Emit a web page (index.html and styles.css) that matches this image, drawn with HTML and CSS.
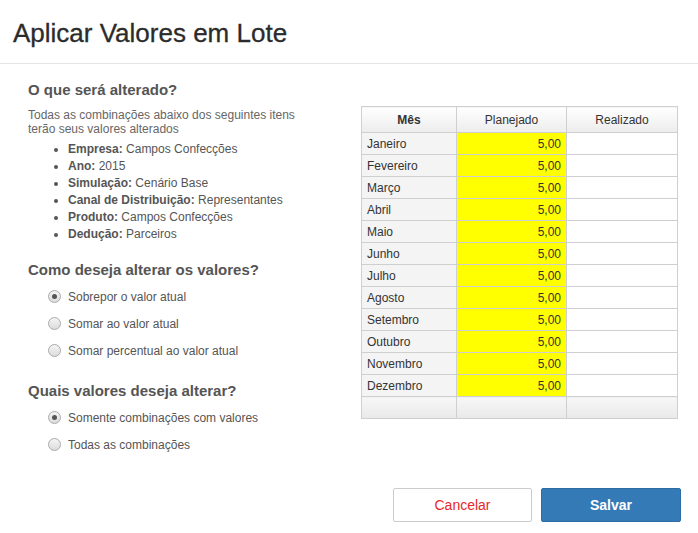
FILE: index.html
```html
<!DOCTYPE html>
<html lang="pt-BR">
<head>
<meta charset="utf-8">
<title>Aplicar Valores em Lote</title>
<link rel="stylesheet" href="styles.css">
</head>
<body>
<div class="modal">
  <header class="modal-header">
    <h1 class="modal-title">Aplicar Valores em Lote</h1>
  </header>
  <div class="modal-body">
    <section class="options">
      <h2 class="section-title first">O que será alterado?</h2>
      <p class="desc">Todas as combinações abaixo dos seguintes itens<br>terão seus valores alterados</p>
      <ul class="filters">
        <li><b>Empresa:</b> Campos Confecções</li>
        <li><b>Ano:</b> 2015</li>
        <li><b>Simulação:</b> Cenário Base</li>
        <li><b>Canal de Distribuição:</b> Representantes</li>
        <li><b>Produto:</b> Campos Confecções</li>
        <li><b>Dedução:</b> Parceiros</li>
      </ul>
      <h2 class="section-title">Como deseja alterar os valores?</h2>
      <div class="radios">
        <label class="radio"><span class="dot checked"></span>Sobrepor o valor atual</label>
        <label class="radio"><span class="dot"></span>Somar ao valor atual</label>
        <label class="radio"><span class="dot"></span>Somar percentual ao valor atual</label>
      </div>
      <h2 class="section-title">Quais valores deseja alterar?</h2>
      <div class="radios">
        <label class="radio"><span class="dot checked"></span>Somente combinações com valores</label>
        <label class="radio"><span class="dot"></span>Todas as combinações</label>
      </div>
    </section>
    <section class="grid-wrap">
      <table class="grid">
        <thead>
          <tr><th class="c-mes">Mês</th><th class="c-plan">Planejado</th><th class="c-real">Realizado</th></tr>
        </thead>
        <tbody>
          <tr><td class="mes">Janeiro</td><td class="plan">5,00</td><td></td></tr>
          <tr><td class="mes">Fevereiro</td><td class="plan">5,00</td><td></td></tr>
          <tr><td class="mes">Março</td><td class="plan">5,00</td><td></td></tr>
          <tr><td class="mes">Abril</td><td class="plan">5,00</td><td></td></tr>
          <tr><td class="mes">Maio</td><td class="plan">5,00</td><td></td></tr>
          <tr><td class="mes">Junho</td><td class="plan">5,00</td><td></td></tr>
          <tr><td class="mes">Julho</td><td class="plan">5,00</td><td></td></tr>
          <tr><td class="mes">Agosto</td><td class="plan">5,00</td><td></td></tr>
          <tr><td class="mes">Setembro</td><td class="plan">5,00</td><td></td></tr>
          <tr><td class="mes">Outubro</td><td class="plan">5,00</td><td></td></tr>
          <tr><td class="mes">Novembro</td><td class="plan">5,00</td><td></td></tr>
          <tr><td class="mes">Dezembro</td><td class="plan">5,00</td><td></td></tr>
        </tbody>
        <tfoot>
          <tr><td></td><td></td><td></td></tr>
        </tfoot>
      </table>
    </section>
  </div>
  <footer class="modal-footer">
    <button class="btn btn-cancel">Cancelar</button>
    <button class="btn btn-save">Salvar</button>
  </footer>
</div>
</body>
</html>
```
FILE: styles.css
```css
* { box-sizing: border-box; }
html, body { margin: 0; padding: 0; background: #fff; }
body {
  font-family: "Liberation Sans", Arial, sans-serif;
  color: #555;
  width: 698px;
  height: 533px;
  overflow: hidden;
}
.modal-header {
  height: 64px;
  padding: 18px 13px 0;
  border-bottom: 1px solid #e5e5e5;
}
.modal-title {
  margin: 0;
  font-size: 26px;
  line-height: 30px;
  font-weight: normal;
  color: #2b2b2b;
  -webkit-text-stroke: 0.3px #2b2b2b;
}
.modal-body {
  display: flex;
  padding: 0 20px 0 28px;
}
.options { width: 334px; }
.section-title {
  margin: 18px 0 0;
  font-size: 15px;
  line-height: 18px;
  font-weight: bold;
  color: #555;
}
.section-title.first { margin-top: 17px; }
.desc {
  margin: 9px 0 0;
  font-size: 12px;
  line-height: 14px;
  color: #666;
}
.filters {
  margin: 5px 0 0;
  padding-left: 40px;
  font-size: 12px;
  line-height: 17px;
  color: #555;
}
.filters b { color: #555; }
.radios {
  margin-top: 4px;
  padding-left: 20px;
  display: flex;
  flex-direction: column;
}
.radio {
  display: flex;
  align-items: center;
  height: 27px;
  font-size: 12px;
  color: #555;
}
.dot {
  width: 13px;
  height: 13px;
  border-radius: 50%;
  border: 1px solid #aaa;
  background: linear-gradient(#f4f4f4, #dcdcdc);
  margin-right: 7px;
  display: inline-flex;
  align-items: center;
  justify-content: center;
}
.dot.checked::after {
  content: "";
  width: 5px;
  height: 5px;
  border-radius: 50%;
  background: #555;
}
.grid-wrap { padding-top: 42px; }
.grid {
  border-collapse: collapse;
  font-size: 12px;
  color: #333;
  table-layout: fixed;
  width: 317px;
}
.grid th, .grid td {
  border: 1px solid #cfcfcf;
  padding: 0 5px;
}
.grid th {
  height: 26px;
  font-weight: bold;
  text-align: center;
  background: linear-gradient(#ffffff, #ececec);
  color: #333;
}
.grid .c-mes { width: 95px; font-weight: bold; }
.grid .c-plan { width: 110px; font-weight: normal; }
.grid .c-real { width: 111px; font-weight: normal; }
.grid td { height: 22px; }
.grid td.mes { background: #f4f4f4; }
.grid td.plan { background: #ffff00; text-align: right; }
.grid tfoot td { background: linear-gradient(#f7f7f7, #e9e9e9); }
.modal-footer {
  display: flex;
  justify-content: flex-end;
  gap: 9px;
  padding: 0 17px 0 0;
  margin-top: 30px;
}
.btn {
  height: 34px;
  font-family: "Liberation Sans", Arial, sans-serif;
  font-size: 14px;
  border-radius: 2px;
  cursor: pointer;
}
.btn-cancel {
  width: 139px;
  background: #fff;
  border: 1px solid #ccc;
  color: #e8272b;
}
.btn-save {
  width: 140px;
  background: #337ab7;
  border: 1px solid #2e6da4;
  color: #fff;
  font-weight: bold;
}
```
